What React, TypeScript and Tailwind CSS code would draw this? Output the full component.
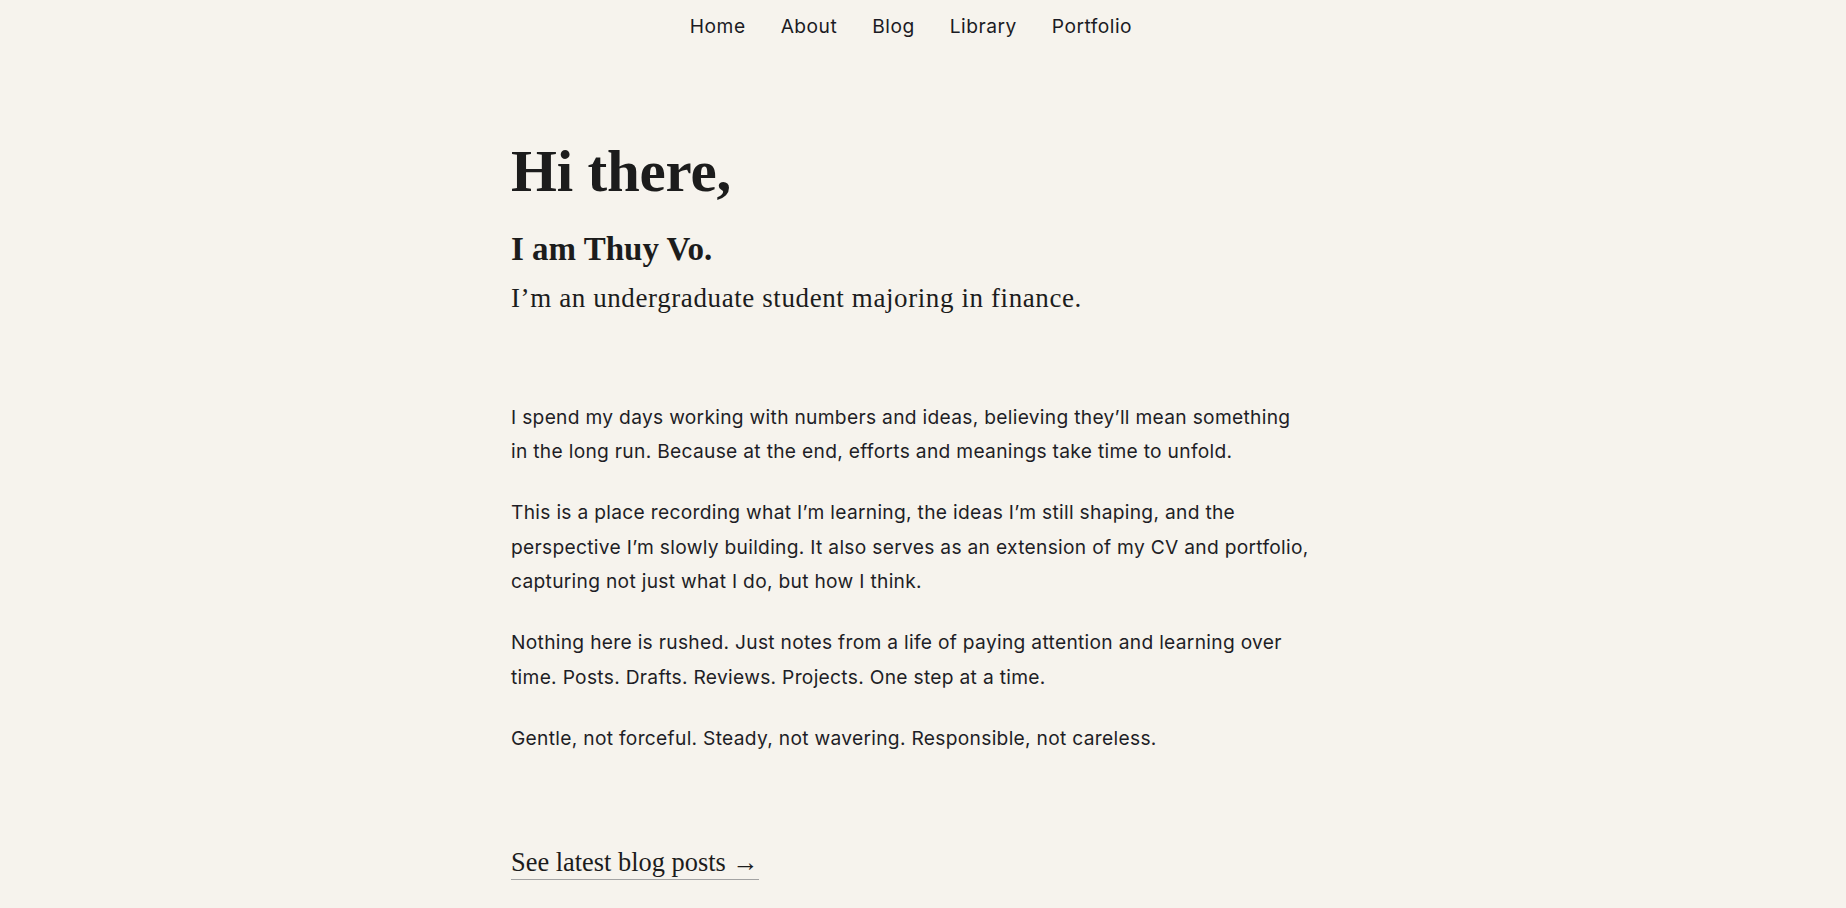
import React from "react";

export default function App() {
  return (
    <div className="min-h-screen w-full bg-[#f6f3ed] text-[#1c1c1c]">
      <div className="pr-[24px]">
        <nav className="flex justify-center gap-[35px] pt-[12px] text-[19.2px] leading-[28.8px] tracking-[0.5px] text-[#1b1b24] font-['Inter',sans-serif]">
          <a href="#">Home</a>
          <a href="#">About</a>
          <a href="#">Blog</a>
          <a href="#">Library</a>
          <a href="#">Portfolio</a>
        </nav>

        <main className="mx-auto w-[800px] pt-[101px] pb-[40px]">
          <h1 className="font-['Liberation_Serif',serif] text-[59px] font-bold leading-[58px] tracking-[-0.2px] text-[#1c1c1c]">
            Hi there,
          </h1>
          <h2 className="mt-[29px] font-['Liberation_Serif',serif] text-[33px] font-bold leading-[40px] text-[#1c1c1c]">
            I am Thuy Vo.
          </h2>
          <p className="mt-[13px] font-['Liberation_Serif',serif] text-[27px] leading-[32px] tracking-[0.6px] text-[#1c1c1c]">
            I’m an undergraduate student majoring in finance.
          </p>

          <div className="mt-[86px] font-['Inter',sans-serif] text-[19.2px] leading-[34.6px] tracking-[0.3px] text-[#1e1e26]">
            <p className="mb-[26.2px]">
              I spend my days working with numbers and ideas, believing they’ll mean something in the long run. Because at the end, efforts and meanings take time to unfold.
            </p>
            <p className="mb-[26.2px]">
              This is a place recording what I’m learning, the ideas I’m still shaping, and the perspective I’m slowly building. It also serves as an extension of my CV and portfolio, capturing not just what I do, but how I think.
            </p>
            <p className="mb-[26.2px]">
              Nothing here is rushed. Just notes from a life of paying attention and learning over time. Posts. Drafts. Reviews. Projects. One step at a time.
            </p>
            <p>Gentle, not forceful. Steady, not wavering. Responsible, not careless.</p>
          </div>

          <div className="mt-[92px]">
            <a
              href="#"
              className="inline-block border-b border-[#a3a3a3] pb-[2px] font-['Liberation_Serif',serif] text-[26.4px] leading-[30px] text-[#1c1c1c]"
            >
              See latest blog posts →
            </a>
          </div>
        </main>
      </div>
    </div>
  );
}
